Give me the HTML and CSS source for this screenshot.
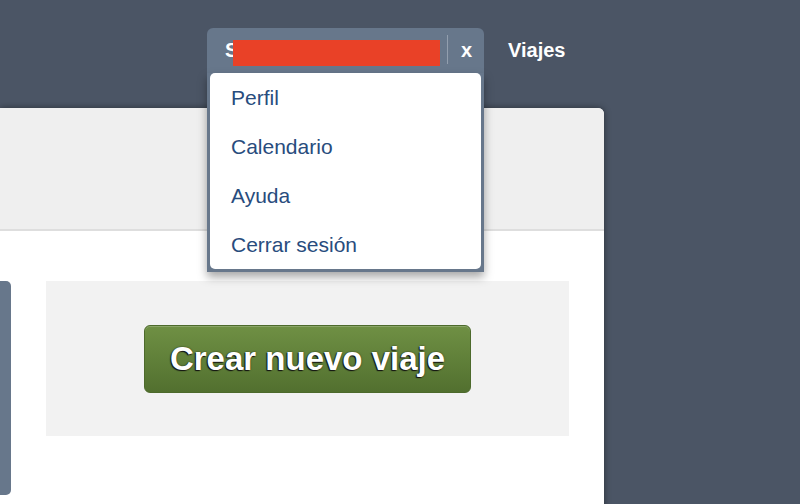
FILE: index.html
```html
<!DOCTYPE html>
<html lang="es">
<head>
<meta charset="utf-8">
<title>Viajes</title>
<link rel="stylesheet" href="styles.css">
</head>
<body>
<nav class="topbar">
  <div class="user-menu">
    <div class="user-head">
      <span class="user-initial">S</span><span class="redacted"></span>
      <span class="sep"></span>
      <span class="close">x</span>
    </div>
    <div class="user-drop">
      <ul class="menu">
        <li><a href="#">Perfil</a></li>
        <li><a href="#">Calendario</a></li>
        <li><a href="#">Ayuda</a></li>
        <li><a href="#">Cerrar sesión</a></li>
      </ul>
    </div>
  </div>
  <a class="nav-link" href="#">Viajes</a>
</nav>
<main class="card">
  <header class="card-head"></header>
  <section class="card-body">
    <div class="side-tab"></div>
    <div class="empty-panel">
      <button class="btn-create">Crear nuevo viaje</button>
    </div>
  </section>
</main>
</body>
</html>
```

FILE: styles.css
```css
html, body {
  margin: 0;
  padding: 0;
}
body {
  background: #4b5565;
  font-family: "Liberation Sans", Arial, Helvetica, sans-serif;
  width: 800px;
  height: 504px;
  overflow: hidden;
}
.topbar {
  display: flex;
  align-items: flex-start;
  height: 108px;
  padding-left: 207px;
  padding-top: 28px;
  box-sizing: border-box;
  position: relative;
  z-index: 2;
}
.user-menu {
  position: relative;
  width: 277px;
}
.user-head {
  display: flex;
  align-items: center;
  height: 45px;
  padding-left: 18px;
  padding-right: 12px;
  box-sizing: border-box;
  background: #67778b;
  border-radius: 6px 6px 0 0;
  color: #fff;
  font-weight: bold;
  font-size: 20px;
}
.user-initial {
  line-height: 45px;
}
.redacted {
  display: inline-block;
  width: 207px;
  height: 26px;
  margin-left: -5px;
  background: #e94127;
  align-self: flex-start;
  margin-top: 12px;
}
.sep {
  width: 1px;
  height: 29px;
  background: #929eae;
  margin-left: 7px;
  align-self: flex-start;
  margin-top: 7px;
}
.close {
  margin-left: 13px;
  line-height: 45px;
}
.user-drop {
  position: absolute;
  top: 45px;
  left: 0;
  right: 0;
  background: #67778b;
  padding: 0 3px 3px;
  box-shadow: 0 5px 9px rgba(0, 0, 0, 0.35);
}
.menu {
  list-style: none;
  margin: 0;
  padding: 0;
  background: #fff;
  border-radius: 5px;
}
.menu li {
  line-height: 49px;
  padding-left: 21px;
  font-size: 21px;
}
.menu a {
  color: #284c7d;
  text-decoration: none;
}
.nav-link {
  margin-left: 24px;
  color: #fff;
  font-weight: bold;
  font-size: 20px;
  line-height: 45px;
  text-decoration: none;
}
.card {
  display: block;
  width: 604px;
  height: 420px;
  background: #fff;
  border-radius: 0 6px 0 0;
  box-shadow: 0 0 7px rgba(0, 0, 0, 0.45);
  position: relative;
  z-index: 1;
  overflow: hidden;
}
.card-head {
  height: 121px;
  background: #efefef;
  border-bottom: 2px solid #dedede;
}
.card-body {
  display: flex;
  align-items: flex-start;
  padding-top: 50px;
  gap: 35px;
}
.side-tab {
  width: 11px;
  height: 214px;
  background: #67778b;
  border-radius: 0 5px 5px 0;
}
.empty-panel {
  width: 523px;
  height: 155px;
  background: #f2f2f2;
  display: flex;
  align-items: center;
  justify-content: center;
}
.btn-create {
  width: 327px;
  height: 68px;
  border: 1px solid #4d6a2c;
  border-radius: 6px;
  background: linear-gradient(#6f9044, #52702f);
  box-shadow: inset 0 1px 0 rgba(255, 255, 255, 0.2);
  color: #fff;
  font-family: "Liberation Sans", Arial, Helvetica, sans-serif;
  font-weight: bold;
  font-size: 33px;
  text-shadow: -1px 1px 1px #111, 0 0 2px rgba(0, 0, 0, 0.6);
  padding: 0;
  cursor: pointer;
}
```
